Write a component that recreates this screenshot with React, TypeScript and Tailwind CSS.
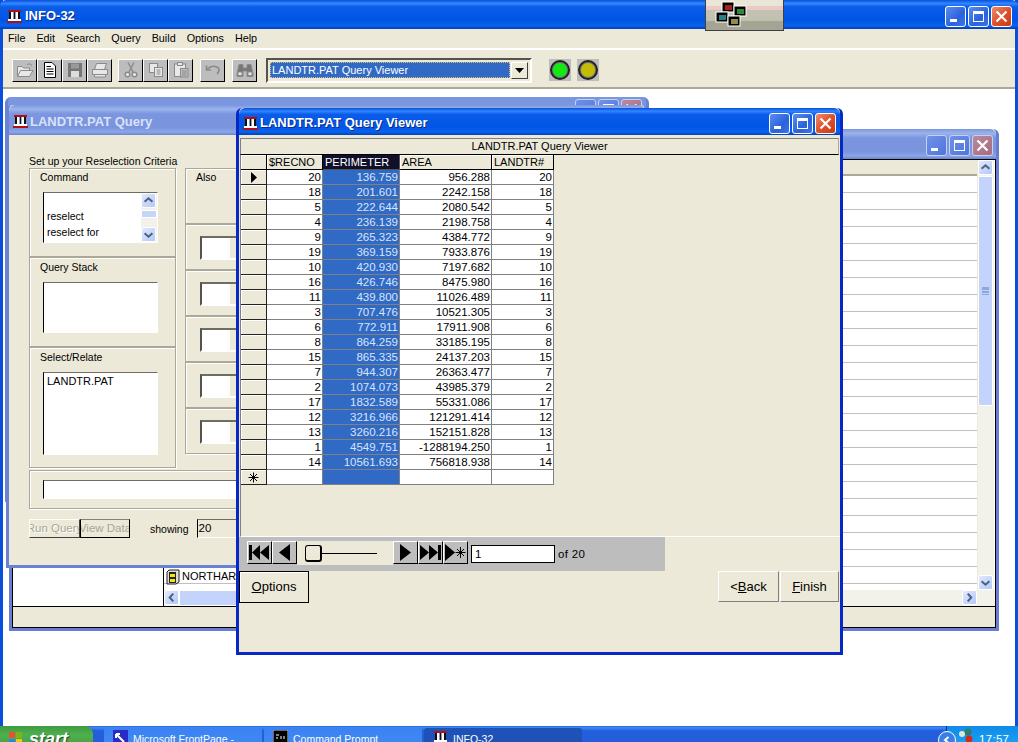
import type { ReactNode } from "react";

const ROWS = [
  ["20", "136.759", "956.288", "20"],
  ["18", "201.601", "2242.158", "18"],
  ["5", "222.644", "2080.542", "5"],
  ["4", "236.139", "2198.758", "4"],
  ["9", "265.323", "4384.772", "9"],
  ["19", "369.159", "7933.876", "19"],
  ["10", "420.930", "7197.682", "10"],
  ["16", "426.746", "8475.980", "16"],
  ["11", "439.800", "11026.489", "11"],
  ["3", "707.476", "10521.305", "3"],
  ["6", "772.911", "17911.908", "6"],
  ["8", "864.259", "33185.195", "8"],
  ["15", "865.335", "24137.203", "15"],
  ["7", "944.307", "26363.477", "7"],
  ["2", "1074.073", "43985.379", "2"],
  ["17", "1832.589", "55331.086", "17"],
  ["12", "3216.966", "121291.414", "12"],
  ["13", "3260.216", "152151.828", "13"],
  ["1", "4549.751", "-1288194.250", "1"],
  ["14", "10561.693", "756818.938", "14"],
];

const SUNKEN = "border border-t-[#6f6d62] border-l-black border-r-white border-b-white bg-white";
const FRAME = "border border-[#aca899] shadow-[inset_1px_1px_0_#fff,1px_1px_0_#fff]";
const RAISED = "border border-t-white border-l-white border-r-[#404040] border-b-[#404040]";

function Pillar() {
  return (
    <svg width="15" height="15" viewBox="0 0 15 15" className="shrink-0">
      <rect x="1" y="1" width="13" height="2" fill="#b01010" />
      <rect x="0" y="12" width="15" height="2" fill="#b01010" />
      <rect x="1" y="10" width="13" height="2" fill="#fff" />
      <rect x="2" y="3" width="2" height="7" fill="#111" />
      <rect x="6.5" y="3" width="2" height="7" fill="#111" />
      <rect x="11" y="3" width="2" height="7" fill="#111" />
      <rect x="4" y="3" width="2.5" height="7" fill="#fff" />
      <rect x="8.5" y="3" width="2.5" height="7" fill="#fff" />
    </svg>
  );
}

function CapButton({ kind, active }: { kind: "min" | "max" | "close"; active: boolean }) {
  const bg =
    kind === "close"
      ? active
        ? "bg-[linear-gradient(135deg,#e9906f,#e0512a_50%,#c93a14)]"
        : "bg-[linear-gradient(135deg,#b98a9c,#a86a80)]"
      : active
        ? "bg-[linear-gradient(135deg,#5c8df0,#2a62dc_60%,#3d74e6)]"
        : "bg-[linear-gradient(135deg,#6f93e8,#4f74dc)]";
  const line = active ? "border-white" : "border-[#c5d2f2]";
  return (
    <div className={`w-[21px] h-[21px] rounded-[3px] border ${line} ${bg} flex items-center justify-center relative`}>
      {kind === "min" && <div className="w-[7px] h-[3px] bg-white absolute left-[4px] bottom-[4px]" />}
      {kind === "max" && <div className="w-[11px] h-[11px] border border-white border-t-[3px]" />}
      {kind === "close" && (
        <svg width="13" height="13" viewBox="0 0 13 13">
          <path d="M1.5 1.5 L11.5 11.5 M11.5 1.5 L1.5 11.5" stroke="#fff" strokeWidth="2.2" />
        </svg>
      )}
    </div>
  );
}

function TitleBar({ title, active, h, pad }: { title: string; active: boolean; h: string; pad: string }) {
  const bg = active
    ? "bg-[linear-gradient(180deg,#0a4fdc_0,#2f86ff_12%,#0a5ce8_24%,#0055e5_70%,#0a62ee_88%,#0040b8_100%)]"
    : "bg-[linear-gradient(180deg,#7a96df_0,#9bb4ec_14%,#7b95df_30%,#7a94de_75%,#8ba6e8_90%,#6a84d0_100%)]";
  return (
    <div className={`${h} ${bg} ${pad} flex items-center pt-[3px] rounded-t-[6px] shrink-0`}>
      <Pillar />
      <span
        className={`font-bold text-[13px] flex-1 truncate [font-family:'Liberation_Sans',sans-serif] ${
          active ? "text-white [text-shadow:1px_1px_0_#0a2a8a]" : "text-[#d8e2f8]"
        }`}
      >
        {title}
      </span>
      <div className="flex gap-[2px]">
        <CapButton kind="min" active={active} />
        <CapButton kind="max" active={active} />
        <CapButton kind="close" active={active} />
      </div>
    </div>
  );
}

function ToolIcon({ name }: { name: string }) {
  const g = "#8a8a8a";
  const w = "#e8e8e8";
  return (
    <svg width="18" height="18" viewBox="0 0 18 18">
      {name === "open" && (
        <g fill={w} stroke={g}>
          <path d="M1.5 15.5 V5.5 H6 L7.5 7 H13.5 V15.5 Z" />
          <path d="M1.5 15.5 L4.5 9.5 H17 L13.5 15.5 Z" />
          <path d="M11 3.5 Q14 1.5 16 4.5" fill="none" />
        </g>
      )}
      {name === "new" && (
        <g>
          <path d="M3.5 1.5 H11 L14.5 5 V16.5 H3.5 Z" fill="#fff" stroke="#000" />
          <path d="M5.5 5.5 H10 M5.5 8 H12.5 M5.5 10.5 H12.5 M5.5 13 H12.5" stroke="#000" />
        </g>
      )}
      {name === "save" && (
        <g>
          <rect x="2" y="2" width="14" height="14" fill="#777" />
          <rect x="5" y="2.5" width="8" height="5" fill="#9a9a9a" />
          <rect x="5" y="10" width="8" height="6" fill="#ddd" />
        </g>
      )}
      {name === "print" && (
        <g fill={w} stroke={g}>
          <path d="M5.5 2.5 H15.5 L13.5 8.5 H3.5 Z" />
          <path d="M1.5 8.5 H16.5 V13.5 H1.5 Z" />
          <path d="M3.5 13.5 H14.5 V16 H3.5 Z" />
        </g>
      )}
      {name === "cut" && (
        <g fill="none" stroke={g} strokeWidth="1.4">
          <path d="M6 1.5 L11 11 M12 1.5 L7 11" />
          <circle cx="5.5" cy="13.5" r="2.3" fill={w} />
          <circle cx="12.5" cy="13.5" r="2.3" fill={w} />
        </g>
      )}
      {name === "copy" && (
        <g fill={w} stroke={g}>
          <rect x="2.5" y="2.5" width="8" height="9" />
          <rect x="7.5" y="6.5" width="8" height="9" />
          <path d="M9.5 9 H13.5 M9.5 11 H13.5 M9.5 13 H13.5" />
        </g>
      )}
      {name === "paste" && (
        <g fill={w} stroke={g}>
          <rect x="2.5" y="3" width="11" height="12.5" />
          <rect x="5.5" y="1.5" width="5" height="3" />
          <rect x="8.5" y="7.5" width="7.5" height="8.5" fill="#bdbdbd" />
          <path d="M10 10 H14.5 M10 12 H14.5 M10 14 H14.5" />
        </g>
      )}
      {name === "undo" && (
        <g fill="none" stroke={g} strokeWidth="1.6">
          <path d="M3 8 Q9 3 14.5 7 Q16 10 13 13" />
          <path d="M2.5 4.5 V9 H7" />
        </g>
      )}
      {name === "find" && (
        <g fill={w} stroke={g}>
          <path d="M3 3.5 H7 V7 H11 V3.5 H15 L17 13 V15.5 H11 V10 H7 V15.5 H1 V13 Z" fill="#777" />
          <rect x="2" y="11" width="4" height="3.5" />
          <rect x="12" y="11" width="4" height="3.5" />
        </g>
      )}
    </svg>
  );
}

function ToolButton({ name }: { name: string }) {
  return (
    <div className="w-[25px] h-[23px] bg-[#bdbdbd] border border-t-white border-l-white border-r-black border-b-black flex items-center justify-center">
      <ToolIcon name={name} />
    </div>
  );
}

function Light({ color }: { color: string }) {
  return (
    <div className="w-[22px] h-[22px] bg-[#bdbdbd] flex items-center justify-center">
      <div className="w-[20px] h-[20px] rounded-full border-2 border-[#222] bg-[#777] p-[1px]">
        <div className={`w-full h-full rounded-full ${color}`} />
      </div>
    </div>
  );
}

function ScrollArrow({ dir, className }: { dir: "up" | "down" | "left" | "right"; className?: string }) {
  const d = {
    up: "M3 9 L7.5 5 L12 9",
    down: "M3 6 L7.5 10 L12 6",
    left: "M9.5 3 L5.5 7.5 L9.5 12",
    right: "M5.5 3 L9.5 7.5 L5.5 12",
  }[dir];
  return (
    <div className={`w-[15px] h-[15px] rounded-[2px] border border-white bg-[linear-gradient(135deg,#e1eafe,#b4c8f6)] shrink-0 ${className ?? ""}`}>
      <svg width="13" height="13" viewBox="0 0 15 15">
        <path d={d} fill="none" stroke="#4d6185" strokeWidth="2.4" />
      </svg>
    </div>
  );
}

function NavButton({ children }: { children: ReactNode }) {
  return (
    <div className="w-[25px] h-[23px] bg-[#bdbdbd] border border-t-white border-l-white border-r-black border-b-black flex items-center justify-center shrink-0">
      {children}
    </div>
  );
}

function NavIcon({ d, star }: { d: string; star?: boolean }) {
  return (
    <svg width="23" height="19" viewBox="0 0 23 19">
      <path d={d} fill="#000" />
      {star && <path d="M16.5 4 V15 M11.5 9.5 H21.5 M13 6 L20 13 M20 6 L13 13" stroke="#000" />}
    </svg>
  );
}

function GridHeader({ label, selected }: { label: string; selected?: boolean }) {
  return (
    <div
      className={`h-[15px] pl-[2px] leading-[15px] text-[11px] truncate border-r border-b ${
        selected ? "bg-[#10102a] text-white border-[#555]" : "bg-[#ece9d8] border-black shadow-[inset_1px_1px_0_#fff]"
      }`}
    >
      {label}
    </div>
  );
}

function Cell({ children, selected }: { children?: ReactNode; selected?: boolean }) {
  return (
    <div
      className={`h-[15px] pr-[1px] text-right leading-[15px] border-r border-b border-[#808080] ${
        selected ? "bg-[#316ac5] text-[#d8e4f8]" : "bg-white"
      }`}
    >
      {children}
    </div>
  );
}

function RowHead({ children }: { children?: ReactNode }) {
  return (
    <div className="h-[15px] bg-[#ece9d8] border-r border-b border-[#222] shadow-[inset_1px_1px_0_#fff] flex items-center justify-center">
      {children}
    </div>
  );
}

function DataGrid() {
  return (
    <div className="grid grid-cols-[26px_56px_77px_92px_62px] w-[313px]">
      <GridHeader label="" />
      <GridHeader label="$RECNO" />
      <GridHeader label="PERIMETER" selected />
      <GridHeader label="AREA" />
      <GridHeader label="LANDTR#" />
      {ROWS.map((r, i) => (
        <div key={i} className="contents">
          <RowHead>
            {i === 0 && (
              <svg width="8" height="11" viewBox="0 0 8 11">
                <path d="M1 0 L7 5.5 L1 11 Z" fill="#000" />
              </svg>
            )}
          </RowHead>
          <Cell>{r[0]}</Cell>
          <Cell selected>{r[1]}</Cell>
          <Cell>{r[2]}</Cell>
          <Cell>{r[3]}</Cell>
        </div>
      ))}
      <RowHead>
        <svg width="11" height="11" viewBox="0 0 11 11">
          <path d="M5.5 0.5 V10.5 M0.5 5.5 H10.5 M2 2 L9 9 M9 2 L2 9" stroke="#000" />
        </svg>
      </RowHead>
      <Cell />
      <Cell selected />
      <Cell />
      <Cell />
    </div>
  );
}

function CriteriaRow() {
  return (
    <div className={`${FRAME} h-[46px] pl-[14px] pt-[11px] overflow-hidden`}>
      <div className="w-[60px] h-[24px] border-2 border-t-[#6f6d62] border-l-[#55544c] border-r-white border-b-white flex">
        <div className="w-[27px] bg-white" />
        <div className="flex-1 bg-[#ece9d8] border-l border-white" />
      </div>
    </div>
  );
}

function QueryWindow() {
  return (
    <div className="absolute left-[6px] top-[105px] w-[642px] h-[463px] bg-[#ece9d8] border-x-[3px] border-b-[3px] border-[#6a82d4] rounded-t-[6px] flex flex-col text-[10.5px]">
      <TitleBar title="LANDTR.PAT Query" active={false} h="h-[30px]" pad="pl-[4px] pr-[4px] gap-[2px]" />
      <div className="pl-[20px] pt-[20px] flex flex-col flex-1">
        <p className="h-[13px] leading-[13px]">Set up your Reselection Criteria</p>
        <div className="flex gap-[9px]">
          <div className="w-[147px]">
            <div className={`${FRAME} h-[89px] pl-[13px] pt-[1px]`}>
              <p className="-ml-[3px] h-[22px]">Command</p>
              <div className={`${SUNKEN} w-[115px] h-[51px] flex`}>
                <div className="flex-1 pt-[15px] pl-[3px] leading-[16px]">
                  <p>reselect</p>
                  <p>reselect for</p>
                </div>
                <div className="w-[16px] flex flex-col bg-[#f2f1ea]">
                  <ScrollArrow dir="up" />
                  <div className="h-[8px] mt-[2px] bg-[#c5d5f8] border border-white" />
                  <div className="flex-1" />
                  <ScrollArrow dir="down" />
                </div>
              </div>
            </div>
            <div className={`${FRAME} h-[90px] pl-[13px] pt-[1px]`}>
              <p className="-ml-[3px] h-[23px] pt-[1px]">Query Stack</p>
              <div className={`${SUNKEN} w-[115px] h-[51px]`} />
            </div>
            <div className={`${FRAME} h-[121px] pl-[13px] pt-[1px]`}>
              <p className="-ml-[3px] h-[23px] pt-[1px]">Select/Relate</p>
              <div className={`${SUNKEN} w-[115px] h-[83px] pl-[3px] text-[11px]`}>LANDTR.PAT</div>
            </div>
          </div>
          <div className="flex-1 pr-[20px]">
            <div className={`${FRAME} h-[56px] pl-[10px] pt-[1px]`}>Also</div>
            <CriteriaRow />
            <CriteriaRow />
            <CriteriaRow />
            <CriteriaRow />
            <CriteriaRow />
          </div>
        </div>
        <div className={`${FRAME} h-[39px] mt-[2px] mr-[20px] pl-[13px] pt-[9px]`}>
          <div className={`${SUNKEN} h-[19px] w-full`} />
        </div>
        <div className="flex items-start mt-[10px] text-[11.5px]">
          <div className={`${RAISED} w-[51px] h-[19px] flex justify-center text-[#a8a698] [text-shadow:1px_1px_0_#fff] whitespace-nowrap overflow-hidden leading-[17px]`}>
            <span className="shrink-0">Run Query</span>
          </div>
          <div className="w-[50px] h-[19px] border border-black border-t-[#808080] bg-[#ece9d8] flex justify-center text-[#a8a698] whitespace-nowrap overflow-hidden leading-[17px]">
            <span className="shrink-0">View Data</span>
          </div>
          <span className="ml-[20px] mt-[3px] text-[10.5px]">showing</span>
          <div className={`${SUNKEN} ml-[8px] w-[90px] h-[19px] !bg-[#ece9d8] pl-px`}>20</div>
        </div>
      </div>
    </div>
  );
}

function FileWindow() {
  return (
    <div className="absolute left-[9px] top-[129px] w-[990px] h-[502px] border-x-[3px] border-b-[3px] border-[#6a7ed0] rounded-t-[6px] bg-[#ece9d8] flex flex-col">
      <TitleBar title="" active={false} h="h-[30px]" pad="pl-[4px] pr-[3px] gap-[2px]" />
      <div className="flex-1 border border-black flex flex-col">
        <div className="flex-1 flex min-h-0">
          <div className="w-[150px] bg-white" />
          <div className="flex-1 flex flex-col border-l border-black bg-white min-w-0">
            <div className="flex-1 flex min-h-0">
              <div className="flex-1 flex flex-col">
                <div className="h-[16px] bg-[#ece9d8] border-b-2 border-[#aca899] shrink-0" />
                {Array.from({ length: 24 }).map((_, i) => (
                  <div key={i} className="h-[17px] border-b border-[#c0c0c0] shrink-0" />
                ))}
              </div>
              <div className="w-[17px] flex flex-col bg-[#f2f1ea] border-l border-[#ece9d8]">
                <ScrollArrow dir="up" />
                <div className="h-[230px] mt-px w-[15px] rounded-[2px] bg-[#c3d3fb] border border-white flex items-center justify-center">
                  <div className="w-[7px] h-[8px] border-y border-[#8ea6e0] bg-[linear-gradient(180deg,#8ea6e0_25%,transparent_25%,transparent_50%,#8ea6e0_50%,#8ea6e0_75%,transparent_75%)]" />
                </div>
                <div className="flex-1" />
                <ScrollArrow dir="down" />
              </div>
              <div className="w-[1px]" />
            </div>
            <div className="h-[16px] flex bg-[#f2f1ea] shrink-0 pr-[18px]">
              <ScrollArrow dir="left" />
              <div className="w-[300px] bg-[#c3d3fb] border border-white" />
              <div className="flex-1" />
              <ScrollArrow dir="right" />
            </div>
          </div>
        </div>
        <div className="h-[21px] border-t border-black bg-[#ece9d8] shrink-0" />
      </div>
    </div>
  );
}

function FileRowOverlay() {
  return (
    <div className="absolute left-[166px] top-[568px] flex items-center gap-[2px] h-[17px]">
      <svg width="14" height="16" viewBox="0 0 14 16">
        <path d="M3 1 H13 V13 L10 15 H1 V3 Z" fill="#ddd" stroke="#222" />
        <rect x="3" y="3" width="7" height="11" fill="#222" />
        <rect x="4" y="5" width="5" height="3" fill="#f2e800" />
        <rect x="4" y="10" width="5" height="3" fill="#f2e800" />
      </svg>
      <span className="text-[11px]">NORTHARP</span>
    </div>
  );
}

function ViewerWindow() {
  return (
    <div className="absolute left-[236px] top-[108px] w-[607px] h-[547px] border-x-[3px] border-b-[3px] border-[#0628c4] rounded-t-[6px] bg-[#ece9d8] flex flex-col">
      <TitleBar title="LANDTR.PAT Query Viewer" active h="h-[27px]" pad="pl-[4px] pr-[4px] gap-[2px]" />
      <div className="flex-1 flex flex-col pt-[3px]">
        <div className="ml-px mr-[1px] h-[17px] border border-[#808080] border-r-[#aca899] text-center text-[11px] leading-[15px] shrink-0 border-b-black">
          LANDTR.PAT Query Viewer
        </div>
        <div className="h-[382px] border-l border-[#808080] ml-px border-b border-b-white shrink-0">
          <DataGrid />
        </div>
        <div className="w-[426px] h-[34px] bg-[#bdbdbd] pl-[8px] pt-[4px] flex items-start shrink-0">
          <NavButton>
            <NavIcon d="M1 2 H4 V17 H1 Z M12 2 V17 L4 9.5 Z M21 2 V17 L12 9.5 Z" />
          </NavButton>
          <NavButton>
            <NavIcon d="M17 1 V18 L6 9.5 Z" />
          </NavButton>
          <div className="w-[96px] h-[24px] bg-[#ece9d8] relative shrink-0">
            <div className="absolute left-[24px] right-[16px] top-[12px] h-px bg-black" />
            <div className="absolute left-[8px] top-[4px] w-[17px] h-[17px] rounded-[3px] border border-black border-r-2 border-b-2 bg-[#ece9d8]" />
          </div>
          <NavButton>
            <NavIcon d="M6 1 V18 L17 9.5 Z" />
          </NavButton>
          <NavButton>
            <NavIcon d="M1 2 V17 L10 9.5 Z M10 2 V17 L19 9.5 Z M19 2 H22 V17 H19 Z" />
          </NavButton>
          <NavButton>
            <NavIcon d="M1 1 V18 L11 9.5 Z" star />
          </NavButton>
          <div className="ml-[3px] mt-[4px] w-[84px] h-[18px] border border-black bg-white pl-[3px] leading-[16px] shrink-0">1</div>
          <span className="ml-[3px] mt-[5px] tracking-[0.3px]">of 20</span>
        </div>
        <div className="flex justify-between pr-px text-[13px]">
          <div className="w-[70px] h-[32px] border border-black shadow-[inset_1px_1px_0_#fff] flex items-center justify-center">
            <span>
              <span className="underline">O</span>ptions
            </span>
          </div>
          <div className="flex gap-[1px]">
            <div className={`${RAISED} w-[61px] h-[31px] flex items-center justify-center !border-r-[#808080] !border-b-[#808080]`}>
              <span>
                &lt;<span className="underline">B</span>ack
              </span>
            </div>
            <div className={`${RAISED} w-[59px] h-[31px] flex items-center justify-center !border-r-[#808080] !border-b-[#808080]`}>
              <span>
                <span className="underline">F</span>inish
              </span>
            </div>
          </div>
        </div>
      </div>
    </div>
  );
}

function Overlay() {
  return (
    <div className="absolute left-[705px] top-0 w-[79px] h-[31px] border border-[#404040] border-t-0 bg-[linear-gradient(180deg,#e9e6d8_0,#e9e6d8_19%,#ecc9c4_20%,#ecc9c4_32%,#c4c2b4_33%,#c2c0b0_66%,#b8c8a8_68%,#a5a394_72%,#a5a394_100%)]">
      <svg width="77" height="30" viewBox="0 0 77 30">
        {[
          [16, 2, "#a52121"],
          [28, 6, "#2f8b33"],
          [10, 12, "#2a8080"],
          [22, 16, "#908e44"],
        ].map(([x, y, c]) => (
          <g key={c as string}>
            <rect x={x as number} y={y as number} width="12" height="10" fill="#000" stroke="#fff" />
            <rect x={(x as number) + 3} y={(y as number) + 3} width="7" height="5" fill={c as string} />
          </g>
        ))}
      </svg>
    </div>
  );
}

function TaskButton({ label, active, icon }: { label: string; active?: boolean; icon: ReactNode }) {
  return (
    <div
      className={`w-[158px] h-[22px] rounded-t-[3px] flex items-start gap-[5px] pl-[9px] pt-[2px] text-white text-[10.5px] ${
        active ? "bg-[#1e52b7]" : "bg-[linear-gradient(180deg,#3c81f3,#3f8cf3)]"
      }`}
    >
      {icon}
      <span className="truncate pt-[2px]">{label}</span>
    </div>
  );
}

function Taskbar() {
  return (
    <div className="h-[16px] shrink-0 overflow-hidden bg-[linear-gradient(180deg,#1f5fd8_0,#3f8af5_10%,#245edb_30%,#245edb_100%)] flex">
      <div className="w-[93px] h-[30px] rounded-r-[8px] bg-[linear-gradient(180deg,#3f9a3f,#4fb04f_30%,#3c8f3c)] flex items-start pl-[8px] pt-[4px] gap-[6px] shrink-0">
        <svg width="15" height="15" viewBox="0 0 15 15" className="mt-[1px]">
          <rect x="1" y="1" width="6" height="6" fill="#e8542a" />
          <rect x="8" y="1" width="6" height="6" fill="#7ab51d" />
          <rect x="1" y="8" width="6" height="6" fill="#2f80ed" />
          <rect x="8" y="8" width="6" height="6" fill="#f5c518" />
        </svg>
        <span className="text-white font-bold italic text-[18px] leading-[18px] [text-shadow:1px_1px_1px_#1a4a1a] [font-family:'Liberation_Sans',sans-serif]">start</span>
      </div>
      <div className="flex gap-[2px] ml-[11px] pt-[2px]">
        <TaskButton
          label="Microsoft FrontPage -"
          icon={
            <svg width="15" height="15" viewBox="0 0 15 15" className="shrink-0">
              <rect width="15" height="15" fill="#2a2ac8" />
              <path d="M3 4 L11 12 M3 4 H7 M3 4 V8" stroke="#fff" strokeWidth="2" fill="none" />
            </svg>
          }
        />
        <TaskButton
          label="Command Prompt"
          icon={
            <svg width="15" height="15" viewBox="0 0 15 15" className="shrink-0">
              <rect width="15" height="15" fill="#000" stroke="#ccc" />
              <path d="M3 5 H6 M3 8 H5 M8 6 V9 M11 6 V9" stroke="#fff" />
            </svg>
          }
        />
        <TaskButton label="INFO-32" active icon={<Pillar />} />
      </div>
      <div className="flex-1" />
      <div className="w-[72px] bg-[linear-gradient(180deg,#0e8be8,#1a9df0)] border-l border-[#0a2a8a] relative flex items-start shrink-0">
        <div className="absolute -left-[9px] top-[5px] w-[18px] h-[18px] rounded-full border border-white bg-[#3a7ee8] flex items-center justify-center">
          <svg width="10" height="10" viewBox="0 0 10 10">
            <path d="M6.5 2 L3 5 L6.5 8" stroke="#fff" strokeWidth="2" fill="none" />
          </svg>
        </div>
        <svg width="18" height="16" viewBox="0 0 18 16" className="ml-[11px] mt-[2px]">
          <circle cx="10" cy="4" r="3.5" fill="#2f7d6a" />
          <circle cx="4" cy="6" r="3" fill="#dfe7d0" />
          <circle cx="11" cy="11" r="3.5" fill="#d02a1a" />
        </svg>
        <span className="text-white ml-[3px] mt-[5px] tracking-[0.3px]">17:57</span>
      </div>
    </div>
  );
}

export default function App() {
  return (
    <div className="relative w-[1018px] h-[742px] overflow-hidden bg-white text-black text-[11.5px] [font-family:'Liberation_Sans',Arial,sans-serif] flex flex-col">
      <div className="flex-1 border-x-[3px] border-[#0a4fdc] flex flex-col min-h-0">
        <div className="-mx-[3px]">
          <TitleBar title="INFO-32" active h="h-[29px]" pad="pl-[7px] pr-[6px] gap-[3px]" />
        </div>
        <nav className="h-[19px] bg-[#ece9d8] flex items-center gap-[11px] pl-[5px] text-[10.8px] shrink-0">
          {["File", "Edit", "Search", "Query", "Build", "Options", "Help"].map((m) => (
            <span key={m}>{m}</span>
          ))}
        </nav>
        <div className="h-[41px] bg-[#ece9d8] border-t-2 border-t-white border-b-2 border-b-[#aca899] flex items-center pl-[9px] pt-[3px] shrink-0">
          <div className="flex">
            <ToolButton name="open" />
            <ToolButton name="new" />
            <ToolButton name="save" />
            <ToolButton name="print" />
          </div>
          <div className="flex ml-[6px]">
            <ToolButton name="cut" />
            <ToolButton name="copy" />
            <ToolButton name="paste" />
          </div>
          <div className="ml-[7px]">
            <ToolButton name="undo" />
          </div>
          <div className="ml-[7px]">
            <ToolButton name="find" />
          </div>
          <div className="ml-[9px] w-[266px] h-[25px] border-2 border-t-[#55544c] border-l-[#55544c] border-r-white border-b-white bg-[#ece9d8] p-[2px] flex items-center text-[11px]">
            <div className="flex-1 h-[16px] bg-[#316ac5] text-white pl-px leading-[15px] border border-dotted border-[#e0c080]">LANDTR.PAT Query Viewer</div>
            <div className={`${RAISED} w-[17px] h-[17px] ml-[1px] flex items-center justify-center`}>
              <svg width="9" height="5" viewBox="0 0 9 5">
                <path d="M0 0 H9 L4.5 5 Z" fill="#000" />
              </svg>
            </div>
          </div>
          <div className="ml-[17px] flex gap-[6px]">
            <Light color="bg-[#12e812]" />
            <Light color="bg-[#c4bc00]" />
          </div>
        </div>
        <div className="flex-1 bg-white" />
      </div>
      <Taskbar />
      <Overlay />
      <FileWindow />
      <FileRowOverlay />
      <div className="absolute left-[5px] top-[97px] w-[644px] h-[405px] rounded-t-[6px] border-x-[3px] border-[#6a82d4] bg-[linear-gradient(180deg,#7a96df,#8ba6e8)]">
        <div className="flex justify-end gap-[2px] pt-[2px] pr-[4px]">
          <CapButton kind="min" active={false} />
          <CapButton kind="max" active={false} />
          <CapButton kind="close" active={false} />
        </div>
      </div>
      <QueryWindow />
      <ViewerWindow />
    </div>
  );
}
